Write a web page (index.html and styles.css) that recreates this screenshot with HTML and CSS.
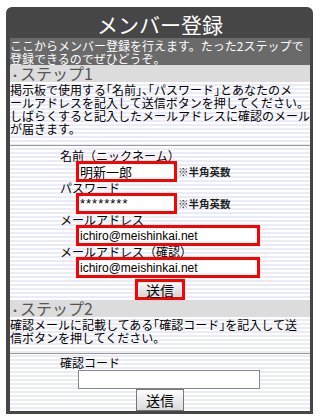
FILE: index.html
```html
<!DOCTYPE html>
<html lang="ja">
<head>
<meta charset="utf-8">
<title>メンバー登録</title>
<link rel="stylesheet" href="styles.css">
</head>
<body>
<div class="frame">
  <h1 class="title">メンバー登録</h1>
  <div class="inner">
    <p class="intro">ここからメンバー登録を行えます。たった2ステップで<br>登録できるのでぜひどうぞ。</p>
    <h2 class="step"><span class="dot">・</span>ステップ1</h2>
    <div class="striped">
      <p class="desc">掲示板で使用する「名前」、「パスワード」とあなたのメ<br>ールアドレスを記入して送信ボタンを押してください。<br>しばらくすると記入したメールアドレスに確認のメール<br>が届きます。</p>
      <hr class="rule">
      <form class="form">
        <div class="label">名前（ニックネーム）</div>
        <div class="row"><input class="field field-short field-name" type="text" value="明新一郎"><span class="note">※半角英数</span></div>
        <div class="label">パスワード</div>
        <div class="row"><input class="field field-short field-pass" type="text" value="********"><span class="note">※半角英数</span></div>
        <div class="label">メールアドレス</div>
        <div class="row"><input class="field field-long" type="text" value="ichiro@meishinkai.net"></div>
        <div class="label">メールアドレス（確認）</div>
        <div class="row"><input class="field field-long" type="text" value="ichiro@meishinkai.net"></div>
        <button class="submit-red" type="button">送信</button>
      </form>
    </div>
    <h2 class="step"><span class="dot">・</span>ステップ2</h2>
    <div class="striped">
      <p class="desc">確認メールに記載してある「確認コード」を記入して送<br>信ボタンを押してください。</p>
      <hr class="rule rule-2">
      <form class="form">
        <div class="label code-label">確認コード</div>
        <input class="code-input" type="text" value="">
        <button class="code-btn" type="button">送信</button>
      </form>
    </div>
  </div>
</div>
</body>
</html>
```

FILE: styles.css
```css
body {
  margin: 0;
  background: #fff;
  font-family: "Noto Sans CJK JP", sans-serif;
  color: #000;
}

.frame {
  margin: 7px 0 0 6px;
  width: 300px;
  padding: 0 3px 3px 4px;
  background: #464646;
  border-radius: 6px 6px 0 0;
}

.title {
  margin: 0;
  height: 31px;
  box-sizing: border-box;
  padding-top: 4px;
  line-height: 27px;
  font-size: 21px;
  font-weight: normal;
  color: #fff;
  text-align: center;
}

.inner {
  overflow: hidden;
}

.intro {
  margin: 0;
  padding-top: 1px;
  background: #6a6a6a;
  color: #fff;
  font-size: 12px;
  line-height: 13px;
  white-space: nowrap;
}

.step {
  margin: 0;
  height: 17px;
  background: #dcdcdc;
  color: #555;
  font-size: 16px;
  line-height: 17px;
  font-weight: normal;
  white-space: nowrap;
}

.dot {
  font-size: 10px;
  font-weight: bold;
}

.striped {
  background: repeating-linear-gradient(#fff 0 2px, #ebebf8 2px 4px);
}

.desc {
  margin: 0;
  padding-top: 1px;
  font-size: 12px;
  line-height: 13px;
  white-space: nowrap;
  font-feature-settings: "halt";
}

.rule {
  margin: 10px 0 3px;
  height: 0;
  border: 0;
  border-top: 1px solid #999;
  border-bottom: 1px solid #fff;
}

.rule-2 {
  margin: 9px 0 1px;
}

.form {
  width: 200px;
  margin: 0 auto;
  display: flex;
  flex-direction: column;
  align-items: flex-start;
}

.label {
  height: 11px;
  font-size: 12px;
  line-height: 11px;
  white-space: nowrap;
}

.row {
  display: flex;
  align-items: center;
  margin-left: 16px;
}

.field {
  box-sizing: border-box;
  height: 21px;
  margin: 0;
  padding: 0 1px;
  border: 3px solid #f00;
  background: #fff;
  color: #000;
  font: 12px "Liberation Sans", sans-serif;
  outline: none;
}

.field-short {
  width: 101px;
}

.field-long {
  width: 184px;
}

.field-name {
  font: 13px "Noto Sans CJK JP", sans-serif;
}

.field-pass {
  font-size: 13px;
  letter-spacing: 1px;
}

.note {
  margin-left: 1px;
  font-size: 10.5px;
  font-weight: bold;
  color: #222;
  white-space: nowrap;
}

.submit-red {
  align-self: center;
  box-sizing: border-box;
  width: 50px;
  height: 21px;
  margin: 1px 0 0;
  padding: 0;
  border: 3px solid #f00;
  background: linear-gradient(#fafafa, #d4d4d4);
  box-shadow: inset 0 0 0 1px #f0f0f0;
  font: 14px/14px "Noto Sans CJK JP", sans-serif;
  color: #000;
}

.code-label {
  height: 14px;
  line-height: 14px;
}

.code-input {
  box-sizing: border-box;
  width: 182px;
  height: 19px;
  margin: 0 0 0 18px;
  padding: 0 2px;
  border: 1px solid #888;
  background: #fff;
  outline: none;
}

.code-btn {
  align-self: center;
  box-sizing: border-box;
  width: 48px;
  height: 22px;
  margin: 0;
  padding: 0;
  border: 1px solid #777;
  background: linear-gradient(#fdfdfd, #dadada);
  font: 14px/14px "Noto Sans CJK JP", sans-serif;
  color: #000;
}
```
